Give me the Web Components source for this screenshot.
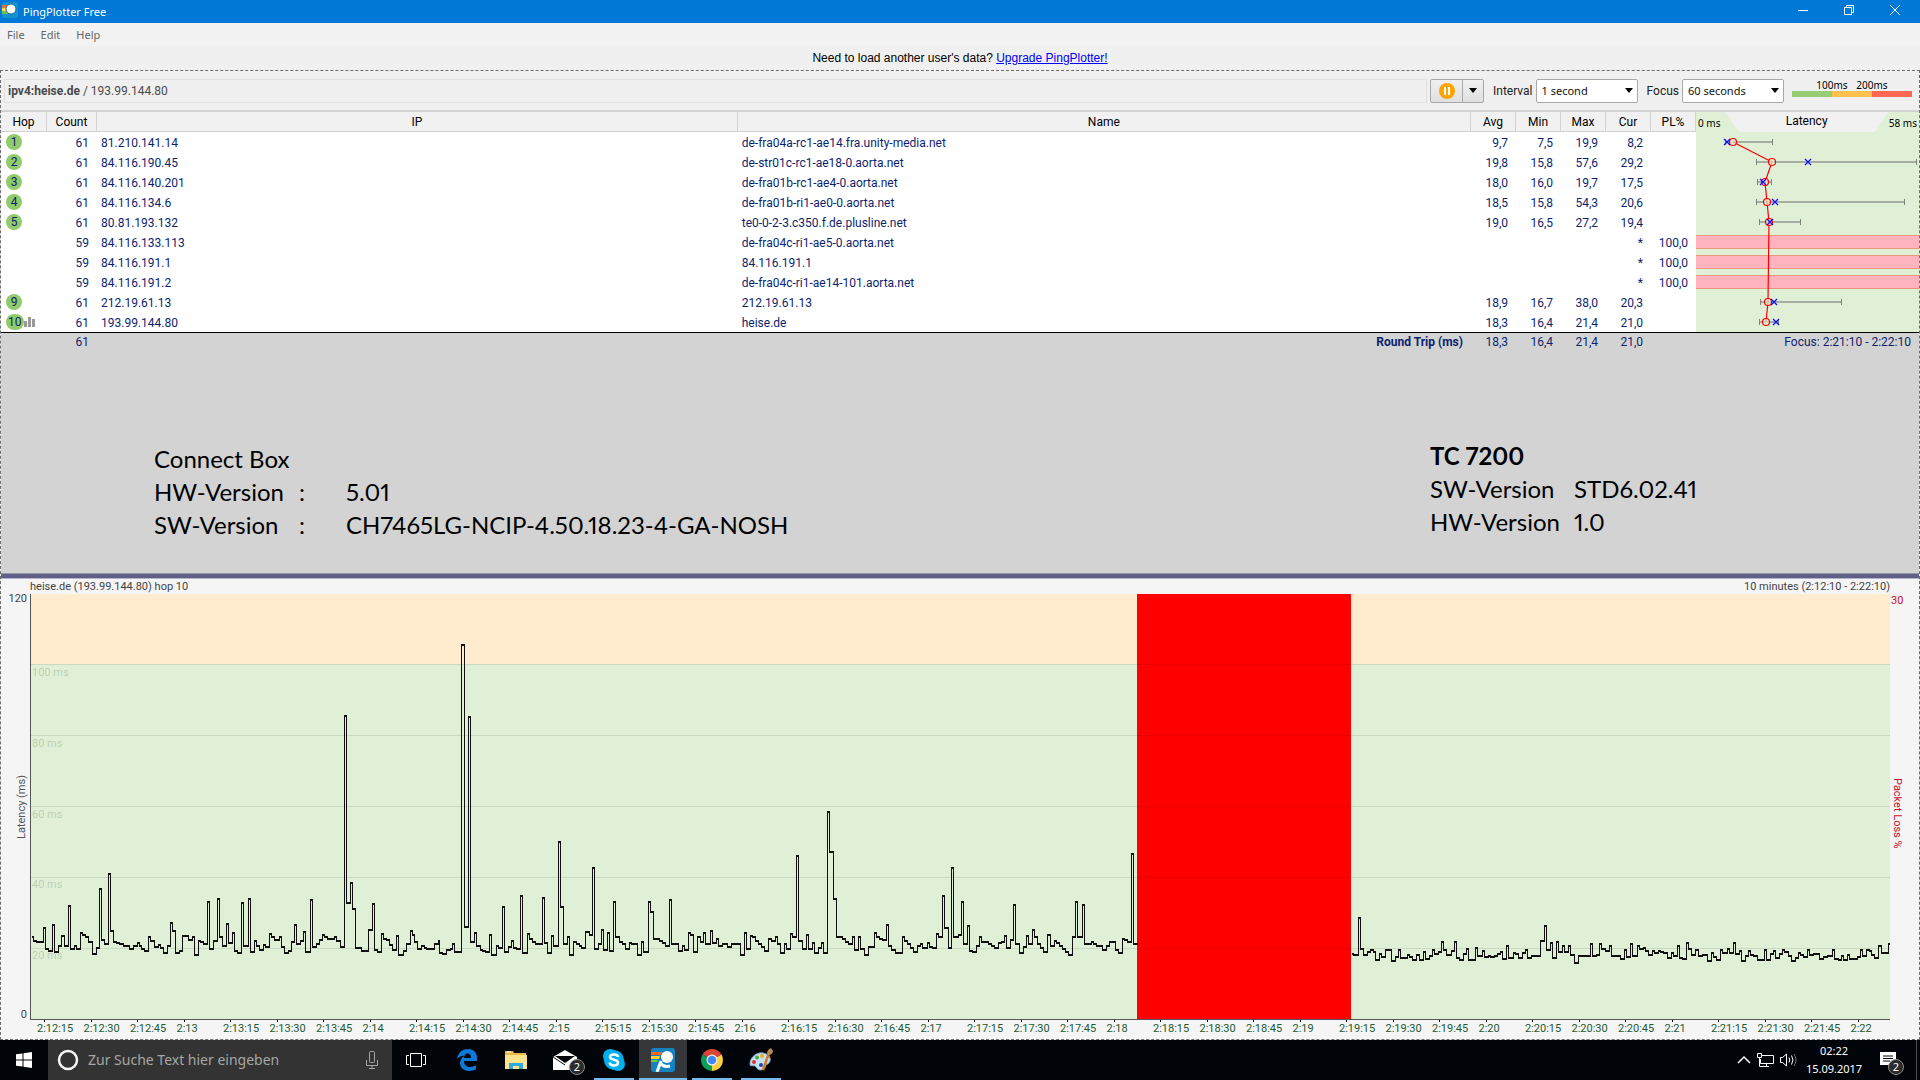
<!DOCTYPE html>
<html lang="de">
<head>
<meta charset="utf-8">
<title>PingPlotter Free</title>
<style>
  html, body { height: 100%; }
  body {
    margin: 0;
    display: flex;
    flex-direction: column;
    background: #f0f0f0;
    color: #000;
    font: 12px/16px Roboto, sans-serif;
  }
  main {
    flex: 1;
    min-height: 0;
    display: flex;
    flex-direction: column;
    border: 1px dashed #6e6e6e;
  }
  .results { display: flex; background: #fff; }
  hop-table { flex: 1; min-width: 0; }
  .notes {
    display: flex;
    justify-content: space-between;
    padding: 88px 219px 32px 153px;
    background: #d3d3d3;
  }
  time-graph { flex: 1; min-height: 0; }
</style>
</head>
<body>
  <title-bar>PingPlotter Free</title-bar>
  <menu-bar>
    <a href="#file">File</a>
    <a href="#edit">Edit</a>
    <a href="#help">Help</a>
  </menu-bar>
  <upgrade-notice>Need to load another user's data? <a slot="link" href="#upgrade">Upgrade PingPlotter!</a></upgrade-notice>
  <main>
    <target-bar data-host="ipv4:heise.de" data-ip="193.99.144.80"></target-bar>
    <div class="results">
      <hop-table></hop-table>
      <latency-graph data-max="58"></latency-graph>
    </div>
    <div class="notes">
      <version-note data-gap="wide">
        <span slot="title">Connect Box</span>
        <span>HW-Version</span><span>:</span><span>5.01</span>
        <span>SW-Version</span><span>:</span><span>CH7465LG-NCIP-4.50.18.23-4-GA-NOSH</span>
      </version-note>
      <version-note data-gap="narrow">
        <b slot="title">TC 7200</b>
        <span>SW-Version</span><span>STD6.02.41</span>
        <span>HW-Version</span><span>1.0</span>
      </version-note>
    </div>
    <time-graph data-title="heise.de (193.99.144.80) hop 10" data-range="10 minutes (2:12:10 - 2:22:10)"></time-graph>
  </main>
  <task-bar></task-bar>

<script>
// one entry per hop: number, count, ip, name, avg, min, max, cur
const hops = [
  [1, 61, "81.210.141.14", "de-fra04a-rc1-ae14.fra.unity-media.net", 9.7, 7.5, 19.9, 8.2],
  [2, 61, "84.116.190.45", "de-str01c-rc1-ae18-0.aorta.net", 19.8, 15.8, 57.6, 29.2],
  [3, 61, "84.116.140.201", "de-fra01b-rc1-ae4-0.aorta.net", 18.0, 16.0, 19.7, 17.5],
  [4, 61, "84.116.134.6", "de-fra01b-ri1-ae0-0.aorta.net", 18.5, 15.8, 54.3, 20.6],
  [5, 61, "80.81.193.132", "te0-0-2-3.c350.f.de.plusline.net", 19.0, 16.5, 27.2, 19.4],
  [6, 59, "84.116.133.113", "de-fra04c-ri1-ae5-0.aorta.net"],
  [7, 59, "84.116.191.1", "84.116.191.1"],
  [8, 59, "84.116.191.2", "de-fra04c-ri1-ae14-101.aorta.net"],
  [9, 61, "212.19.61.13", "212.19.61.13", 18.9, 16.7, 38.0, 20.3],
  [10, 61, "193.99.144.80", "heise.de", 18.3, 16.4, 21.4, 21.0]
];
const fmt = n => n.toFixed(1).replace(".", ",");

function attach(el, html){
  const template = document.createElement("template");
  template.innerHTML = html;
  el.attachShadow({mode:"open"}).appendChild(template.content.cloneNode(true));
}

class TitleBar extends HTMLElement{
  constructor(){
    super();
    attach(this, `
<style>
  :host{ display: flex; align-items: center; height: 23px; padding-right: 2px; background: #0078d7; color: #fff; font: 11px/16px "Noto Sans", sans-serif; }
  .logo{ margin: 0 5px 4px 2px; }
  .name{ flex: 1; }
  button{ width: 46px; height: 23px; padding: 0 0 3px; border: 0; background: none; }
  svg{ display: block; margin: auto; }
</style>
<svg class="logo" width="16" height="16" viewBox="0 0 16 16">
  <rect width="16" height="16" rx="3" fill="#1592cf"/>
  <path d="M0 3h8v3H0z" fill="#f26b3a"/><path d="M0 6h6v3H0z" fill="#ffd93b"/><path d="M0 9h6v3H0z" fill="#6fc04f"/>
  <circle cx="9" cy="7" r="5" fill="#fff" stroke="#0d6d9f"/>
</svg>
<span class="name"><slot></slot></span>
<button aria-label="Minimize"><svg width="10" height="10"><path d="M0 5.500h10" stroke="#fff"/></svg></button>
<button aria-label="Restore"><svg width="10" height="10" fill="none" stroke="#fff"><path d="M.5 2.500h7v7h-7zM2.500 2V.5h7v7H8"/></svg></button>
<button aria-label="Close"><svg width="10" height="10"><path d="M0 0l10 10M10 0L0 10" stroke="#fff"/></svg></button>
`);
  }
}
customElements.define("title-bar", TitleBar);

class MenuBar extends HTMLElement{
  constructor(){
    super();
    attach(this, `
<style>
  :host{ display: block; background: #f2f2f2; font: 11px/23px "Noto Sans", sans-serif; }
  nav{ display: flex; gap: 16px; height: 23px; padding-left: 7px; }
  ::slotted(a){ color: #666; text-decoration: none; }
</style>
<nav><slot></slot></nav>
`);
  }
}
customElements.define("menu-bar", MenuBar);

class UpgradeNotice extends HTMLElement{
  constructor(){
    super();
    attach(this, `
<style>
  :host{ display: block; height: 24px; text-align: center; font: 12px/24px "Liberation Sans", sans-serif; }
  ::slotted(a){ color: #00f; }
</style>
<slot></slot> <slot name="link"></slot>
`);
  }
}
customElements.define("upgrade-notice", UpgradeNotice);

class TargetBar extends HTMLElement{
  constructor(){
    super();
    attach(this, `
<style>
  :host{ display: flex; align-items: center; height: 39px; padding: 0 7px 0 3px; border-bottom: 2px solid #d3d3d3; box-sizing: content-box; }
  *{ box-sizing: border-box; }
  .target{ flex: 1; height: 24px; padding: 0 3px; border: 1px solid #e1e1e1; color: #4a4a4a; line-height: 23px; }
  .split{ display: flex; height: 24px; margin: 0 9px 0 3px; border: 1px solid #a8a8a8; border-radius: 2px; background: linear-gradient(#f0f0f0, #e0e0e0); }
  button{ display: flex; align-items: center; justify-content: center; padding: 0; border: 0; background: none; }
  .pause{ width: 31px; }
  .more{ width: 21px; border-left: 1px solid #a8a8a8; }
  label{ display: flex; align-items: center; gap: 3px; margin-right: 9px; color: #222; }
  label:last-of-type{ margin-right: 8px; }
  .box{ position: relative; }
  .box svg{ position: absolute; right: 5px; top: 9px; pointer-events: none; }
  select{ appearance: none; width: 102px; height: 24px; padding: 0 5px; border: 1px solid #a8a8a8; border-radius: 2px; background: #fff; color: #111; font: 11px/22px "Noto Sans", sans-serif; }
  .legend{ width: 120px; padding-bottom: 5px; font: 10px/12px "Noto Sans", sans-serif; text-align: center; }
  .labels{ display: flex; justify-content: center; }
  .labels span{ width: 40px; }
  .bar{ display: flex; height: 6px; }
  .bar i{ flex: 1; background: #97ce74; }
  .bar .warn{ background: #ffc04d; }
  .bar .bad{ background: #ff6750; }
</style>
<div class="target"><b></b> / <span></span></div>
<div class="split">
  <button class="pause" aria-label="Pause">
    <svg width="16" height="16"><circle cx="8" cy="8" r="8" fill="#ffa500"/><path d="M6 4v8M10 4v8" stroke="#fff" stroke-width="2"/></svg>
  </button>
  <button class="more" aria-label="More"><svg width="8" height="5"><path d="M0 0h8L4 5z"/></svg></button>
</div>
<label for="interval">Interval
  <span class="box"><select id="interval"><option>1 second</option><option>5 seconds</option></select><svg width="8" height="5"><path d="M0 0h8L4 5z"/></svg></span>
</label>
<label for="focus">Focus
  <span class="box"><select id="focus"><option>60 seconds</option><option>5 minutes</option></select><svg width="8" height="5"><path d="M0 0h8L4 5z"/></svg></span>
</label>
<div class="legend">
  <div class="labels"><span>100ms</span><span>200ms</span></div>
  <div class="bar"><i></i><i class="warn"></i><i class="bad"></i></div>
</div>
`);
  }
  connectedCallback(){
    this.shadowRoot.querySelector("b").textContent = this.dataset.host;
    this.shadowRoot.querySelector(".target span").textContent = this.dataset.ip;
  }
}
customElements.define("target-bar", TargetBar);

class HopTable extends HTMLElement{
  constructor(){
    super();
    attach(this, `
<style>
  :host{ display: block; }
  table{ width: 100%; table-layout: fixed; border-collapse: separate; border-spacing: 0; color: #0c1f70; }
  .hop{ width: 46px; }
  .count{ width: 50px; }
  .ip{ width: 37.8%; }
  .num{ width: 45px; }
  th, td{ box-sizing: border-box; height: 20px; padding: 0; white-space: nowrap; text-align: right; font-weight: normal; }
  th{ border-right: 1px solid #d3d3d3; border-bottom: 1px solid #d3d3d3; background: #f1f1f1; color: #000; text-align: center; }
  td{ padding: 2px 8px 0 0; }
  td.text{ padding-left: 4px; text-align: left; }
  td.mark{ padding: 0 0 0 5px; text-align: left; }
  .mark div{ display: flex; align-items: center; }
  .mark span{ min-width: 16px; padding: 0 2px; box-sizing: border-box; border-radius: 8px; background: #91cb6c; text-align: center; }
  tfoot td{ height: 19px; padding-top: 0; border-top: 1px solid #000; background: #d3d3d3; }
</style>
<table>
  <colgroup><col class="hop"><col class="count"><col class="ip"><col><col class="num"><col class="num"><col class="num"><col class="num"><col class="num"></colgroup>
  <thead><tr><th>Hop</th><th>Count</th><th>IP</th><th>Name</th><th>Avg</th><th>Min</th><th>Max</th><th>Cur</th><th>PL%</th></tr></thead>
  <tbody></tbody>
  <tfoot><tr><td></td><td>61</td><td></td><td><b>Round Trip (ms)</b></td><td>18,3</td><td>16,4</td><td>21,4</td><td>21,0</td><td></td></tr></tfoot>
</table>
`);
  }
  connectedCallback(){
    const bars = `<svg width="11" height="10" fill="#999"><path d="M0 4h3v6H0zM4 0h3v10H4zM8 2h3v8H8z"/></svg>`;
    this.shadowRoot.querySelector("tbody").innerHTML = hops.map(([n, count, ip, name, ...ms]) => {
      const lost = !ms.length;
      const mark = lost ? "" : `<div><span>${n}</span>${n === 10 ? bars : ""}</div>`;
      const nums = lost ? `<td></td><td></td><td></td><td>*</td><td>100,0</td>`
        : ms.map(v => `<td>${fmt(v)}</td>`).join("") + `<td></td>`;
      return `<tr><td class="mark">${mark}</td><td>${count}</td><td class="text">${ip}</td><td class="text">${name}</td>${nums}</tr>`;
    }).join("");
  }
}
customElements.define("hop-table", HopTable);

class LatencyGraph extends HTMLElement{
  constructor(){
    super();
    attach(this, `
<style>
  :host{ display: flex; flex-direction: column; width: 223px; background: #dff0d6; }
  header{ display: flex; justify-content: space-between; height: 20px; font: 10px/22px "Noto Sans", sans-serif; padding: 0 2px; }
  h2{ flex: 1; margin: 0 0 0 4px; background: #f1f1f1; clip-path: polygon(0 0, 100% 0, calc(100% - 14px) 100%, 15px 100%); font: 12px/18px Roboto, sans-serif; text-align: center; }
  svg{ display: block; }
  footer{ height: 18px; padding-right: 8px; border-top: 1px solid #000; background: #d3d3d3; color: #0c1f70; line-height: 18px; text-align: right; }
</style>
<header><span>0 ms</span><h2>Latency</h2><span class="max"></span></header>
<svg width="223" height="200" fill="none"></svg>
<footer>Focus: 2:21:10 - 2:22:10</footer>
`);
  }
  connectedCallback(){
    const max = Number(this.dataset.max);
    this.shadowRoot.querySelector(".max").textContent = max + " ms";
    const x = ms => Math.round(ms * 222 / max);
    let lost = "", ranges = "", marks = "", line = [], rings = "";
    hops.forEach(([n, , , , avg, min, high, cur], i) => {
      const y = i * 20 + 10;
      if(avg === undefined){
        lost += `<path d="M0 ${y - 6.5}H223M0 ${y + 6.5}H223" stroke="#e9967a"/><path d="M0 ${y - 6}H223V${y + 6}H0z" fill="#ffb3be"/>`;
        return;
      }
      ranges += `<path d="M${x(min)} ${y}H${x(high)}" stroke="#a6ada3" stroke-width="2"/><path d="M${x(min)}.5 ${y - 3}v6M${x(high)}.5 ${y - 3}v6" stroke="#7c8379"/>`;
      line.push(x(avg) + "," + y);
      rings += `<circle cx="${x(avg)}" cy="${y}" r="3.500"/>`;
      marks += `M${x(cur) - 3} ${y - 3}l6 6m0 -6l-6 6`;
    });
    this.shadowRoot.querySelector("svg").innerHTML = lost + ranges +
      `<polyline points="${line.join(" ")}" stroke="#f00" stroke-width="1.200"/><g stroke="#f00" stroke-width="1.200" fill="#dff0d6" fill-opacity=".7">${rings}</g><path d="${marks}" stroke="#1010ff" stroke-width="1.300"/>`;
  }
}
customElements.define("latency-graph", LatencyGraph);

class VersionNote extends HTMLElement{
  constructor(){
    super();
    attach(this, `
<style>
  :host{ display: block; font: 24px/33px Lato, sans-serif; font-variant-numeric: proportional-nums; }
  .rows{ display: grid; grid-template-columns: 144px 1fr; white-space: nowrap; }
  :host([data-gap="narrow"]){ width: 270px; }
  :host([data-gap="wide"]) .rows{ grid-template-columns: 145px 47px 1fr; }
  :host([data-gap="wide"]){ margin-top: 3px; }
</style>
<slot name="title"></slot>
<div class="rows"><slot></slot></div>
`);
  }
}
customElements.define("version-note", VersionNote);

// Recorded steps as "x:level", in thirds of a pixel, split in blocks 480 px apart.
// Level 1348 is 0 ms, "-" is a gap without replies.
const trace = [
  `93:1101 99:1112 108:1115 131:1074 137:1137 146:1143 158:1064 164:1146 176:1128 185:1097 194:1128 206:1008 212:1137 222:1128 230:1137 242:1088 248:1096 257:1101 266:1117 278:1152 290:1134 299:957 305:1109 314:1121 326:912 332:1083 341:1116 350:1119 359:1123 371:1129 389:1137 400:1128 411:1119 417:1128 425:1136 434:1143 446:1101 452:1112 464:1130 476:1124 482:1133 491:1149 503:1129 512:1059 518:1083 527:1149 539:1142 548:1097 566:1109 578:1101 584:1155 596:1113 602:1116 611:1121 623:996 629:1137 641:1112 653:986 659:1101 668:1128 680:1062 686:1118 698:1088 704:1143 713:1149 725:998 731:1128 746:986 752:1146 764:1112 770:1128 779:1140 791:1126 797:1130 809:1091 815:1101 824:1109 839:1101 845:1130 854:1149 866:1143 875:1115 884:1064 890:1121 902:1112 911:1086 917:1146 932:990 938:1130 950:1121 959:1110 968:1095 974:1101 983:1106 1004:1101 1010:1113 1022:1130 1034:438 1040:998 1052:939 1058:1018 1067:1133 1085:1142 1106:1080 1118:1001 1124:1140 1133:1146 1145:1091 1151:1106 1160:1110 1169:1124 1178:1140 1190:1097 1196:1155 1211:1142 1220:1123 1230:1083 1236:1095 1244:1116 1253:1137 1265:1128 1272:1133 1280:1137 1304:1123 1314:1113 1319:1149 1328:1152 1340:1140 1350:1136 1358:1122 1364:1146 1385:225 1394:1071 1406:440 1412:1116 1424:1089 1430:1128`,
  `0:1140 8:1143 17:1146 29:1095 35:1155 50:1128 56:1134 68:1011 74:1146 86:1130 95:1112 101:1133 110:1137 122:977 128:1149 143:1091 149:1106 158:1115 167:1123 188:983 194:1119 203:1149 215:1097 221:1128 236:816 242:1011 251:1122 263:1101 269:1155 281:1115 288:1122 297:1129 305:1134 317:1086 327:1095 338:894 344:1137 356:1123 365:1080 371:1140 383:1089 389:1143 401:996 407:1102 417:1115 427:1123 437:1137 449:1119 455:1123 472:1155 485:1115 491:1146 506:996 512:1026 521:1107 539:1113 548:1119 557:1128 569:990 575:1122 596:1143 608:1128 614:1140 626:1088 632:1095 641:1146 653:1101 660:1115 671:1088 677:1123 692:1083 698:1119 710:1106 716:1128 728:1122 742:1130 755:1122 770:1123 782:1155 794:1088 800:1137 812:1097 818:1102 827:1113 836:1123 845:1130 854:1143 866:1106 875:1113 887:1101 893:1122 902:1149 914:1123 920:1137 932:1092 938:1101 950:859 956:1113 968:1137 980:1095 986:1137 998:1119 1004:1149 1016:1134 1025:1119 1031:1149 1043:725 1049:846 1061:986 1070:1101 1088:1107 1097:1116 1106:1123 1118:1101 1124:1140 1136:1101 1142:1137 1154:1155 1166:1130 1184:1088 1190:1101 1199:1107 1208:1110 1220:1064 1226:1128 1235:1140 1247:1149 1268:1101 1274:1113 1283:1123 1292:1134 1301:1146 1313:1128 1321:1123 1328:1134 1343:1119 1349:1130 1358:1134 1370:1092 1376:1102 1388:977 1394:1074 1404:1134 1415:893 1421:1101 1436:1095`,
  `0:1095 5:996 11:1122 23:1068 29:1143 37:1146 50:1128 59:1101 65:1115 86:1122 95:1129 104:1134 116:1119 125:1115 134:1097 140:1134 152:1109 161:1004 167:1122 179:1149 191:1130 200:1097 206:1122 218:1080 224:1102 233:1122 242:1134 251:1146 263:1095 271:1128 284:1112 290:1119 299:1128 308:1137 317:1146 326:1155 338:1101 347:996 353:1102 368:1004 374:1123 395:1115 401:1123 410:1128 428:1140 440:1128 449:1115 467:1140 476:1149 488:1106 494:1110 503:1116 515:852 521:1122 531:- 1173:1152 1181:1155 1196:1044 1202:1137 1211:1155 1223:1146 1232:1140 1239:1146 1247:1170 1259:1152 1265:1161 1277:1140 1295:1173 1307:1161 1316:1140 1322:1164 1343:1155 1349:1161 1358:1170 1370:1155 1379:1170 1391:1146 1397:1167 1409:1158 1418:1140 1424:1152 1436:1146`,
  `0:1146 5:1115 11:1140 20:1155 35:1143 44:1115 50:1164 59:1170 71:1152 80:1137 86:1170 107:1133 113:1158 128:1142 134:1160 146:1158 152:1160 164:1158 173:1152 182:1145 188:1167 200:1128 206:1164 221:1148 227:1152 236:1164 248:1149 257:1139 263:1164 275:1158 302:1112 314:1068 320:1140 332:1119 338:1164 350:1115 356:1146 368:1128 374:1146 386:1128 392:1155 404:1179 416:1158 452:1123 458:1158 470:1155 479:1123 485:1137 497:1142 509:1128 515:1158 542:1167 554:1139 560:1161 572:1121 578:1158 593:1128 599:1137 611:1133 617:1142 626:1155 638:1143 644:1149 656:1143 662:1146 671:1149 683:1164 695:1149 701:1158 713:1128 719:1164 728:1167 740:1118 746:1137 755:1155 767:1140 775:1158 788:1154 803:1173 815:1149 821:1161 830:1170 842:1139 848:1149 863:1137 869:1148 881:1118 887:1152 899:1142 905:1173 917:1158 926:1143 932:1155 941:1158 953:1170 974:1140 980:1169 992:1152 1001:1143 1007:1164 1019:1152 1028:1140 1034:1146 1046:1158 1055:1173 1067:1163 1076:1149 1082:1155 1091:1160 1103:1140 1109:1155 1121:1151 1139:1167 1151:1160 1163:1157 1178:1140 1184:1167 1196:1170 1205:1158 1211:1170 1223:1155 1229:1167 1253:1160 1262:1140 1268:1158 1280:1140 1289:1143 1295:1155 1304:1164 1316:1128 1325:1149 1346:1123 1350:-`
];

class TimeGraph extends HTMLElement{
  constructor(){
    super();
    attach(this, `
<style>
  :host{
    display: grid;
    grid-template-columns: 29px 1fr 29px;
    grid-template-rows: 6px 15px 1fr 19px;
    background: #f5f5f5;
    color: #444;
    font-size: 11px;
    line-height: 15px;
  }
  .splitter{ grid-column: 1 / 4; box-sizing: border-box; border-top: 1px solid #9696aa; border-bottom: 1px solid #b4b4cc; background: #5f5f87; }
  header{ grid-column: 2; display: flex; justify-content: space-between; }
  .left, .right{ grid-row: 3; display: flex; flex-direction: column; justify-content: space-between; }
  .left{ grid-column: 1; align-items: flex-end; padding-right: 3px; line-height: 10px; }
  .right{ grid-column: 3; align-items: flex-start; padding: 0 1px; color: #c8102e; line-height: 13px; }
  .left b, .right b{ font-weight: normal; writing-mode: vertical-rl; }
  .left b{ transform: rotate(180deg); color: #555; line-height: 11px; }
  .left i, .right i{ font-style: normal; }
  .plot{ grid-column: 2; grid-row: 3; position: relative; display: grid; grid-template-rows: repeat(6, 1fr); border-left: 1px solid #555; border-bottom: 1px solid #555; }
  .plot svg{ position: absolute; left: 0; top: 0; width: 100%; height: 100%; }
  .plot span{ position: relative; padding: 0 1px; color: rgba(80, 100, 70, .25); }
  .times{ grid-column: 2; display: grid; grid-template-columns: repeat(40, 1fr); padding-left: 7px; margin-right: -7px; color: #1c5a33; white-space: nowrap; line-height: 14px; }
  .times span::before{ content: ""; display: block; width: 1px; height: 2px; margin-left: 7px; background: #000; }
</style>
<div class="splitter"></div>
<header><span class="title"></span><span class="range"></span></header>
<div class="left"><i>120</i><b>Latency (ms)</b><i>0</i></div>
<div class="plot">
  <svg viewBox="0 0 1859 425" preserveAspectRatio="none" shape-rendering="crispEdges">
    <path d="M0 0h1859v70H0z" fill="#ffebcd"/>
    <path d="M0 70h1859v355H0z" fill="#dff0d6"/>
    <path d="M1106 0h214v425h-214z" fill="#f00"/>
    <path d="M0 70.500h1859M0 141.500h1859M0 212.500h1859M0 283.500h1859M0 354.500h1859" stroke="#000" stroke-opacity=".09"/>
    <g fill="none" stroke="#111"><path class="trace"/><path class="trace" transform="translate(0 1)"/></g>
  </svg>
</div>
<div class="right"><i>30</i><b>Packet Loss %</b><i></i></div>
<div class="times"></div>
`);
  }
  connectedCallback(){
    this.shadowRoot.querySelector(".title").textContent = this.dataset.title;
    this.shadowRoot.querySelector(".range").textContent = this.dataset.range;
    let d = "", down = false;
    trace.forEach((block, i) => {
      for(const step of block.split(" ")){
        const [sx, sy] = step.split(":");
        const x = i * 480 - 31 + Math.floor(sx / 3) + 0.5;
        if(down) d += "H" + x;
        if(sy === "-"){ down = false; continue; }
        const y = Math.round(sy / 3) - 24.5;
        d += down ? "V" + y : "M" + x + " " + y;
        down = true;
      }
    });
    this.shadowRoot.querySelectorAll(".trace").forEach(p => p.setAttribute("d", d));
    const plot = this.shadowRoot.querySelector(".plot");
    ["", "100 ms", "80 ms", "60 ms", "40 ms", "20 ms"].forEach(t => {
      const label = document.createElement("span");
      label.textContent = t;
      plot.appendChild(label);
    });
    // a label each 15 seconds, full minutes without the seconds
    let times = "";
    for(let s = 15; s <= 600; s += 15){
      const min = 12 + Math.floor(s / 60);
      times += `<span>2:${min}${s % 60 ? ":" + s % 60 : ""}</span>`;
    }
    this.shadowRoot.querySelector(".times").innerHTML = times;
  }
}
customElements.define("time-graph", TimeGraph);

class TaskButton extends HTMLElement{
  constructor(){
    super();
    attach(this, `
<style>
  :host{ display: block; width: 48px; height: 40px; }
  button{ display: flex; align-items: center; justify-content: center; position: relative; box-sizing: border-box; width: 100%; height: 100%; padding: 0; border: 0; background: none; }
  :host([data-state]) button::after{ content: ""; position: absolute; left: 4px; right: 4px; bottom: 0; height: 2px; background: #76b9ed; }
  :host([data-state="active"]) button{ background: #35373b; }
  :host([data-state="active"]) button::after{ left: 0; right: 0; }
  .badge{ position: absolute; right: 4px; bottom: 5px; width: 16px; height: 16px; box-sizing: border-box; border: 1px solid #8a8a8a; border-radius: 8px; background: #2b2b2b; color: #fff; font: 11px/14px "Noto Sans", sans-serif; }
  .badge:empty{ display: none; }
</style>
<button><slot></slot><span class="badge"></span></button>
`);
  }
  connectedCallback(){
    this.shadowRoot.querySelector("button").setAttribute("aria-label", this.dataset.label);
    this.shadowRoot.querySelector(".badge").textContent = this.dataset.badge || "";
  }
}
customElements.define("task-button", TaskButton);

class TaskBar extends HTMLElement{
  constructor(){
    super();
    attach(this, `
<style>
  :host{ display: flex; height: 40px; background: #010409; color: #fff; font: 12px/18px "Noto Sans", sans-serif; }
  svg{ display: block; }
  .search{ display: flex; align-items: center; width: 344px; box-sizing: border-box; padding: 0 14px 0 9px; background: #333; }
  input{ flex: 1; min-width: 0; margin: 0; padding: 0 0 0 9px; border: 0; background: none; color: #fff; font: 14px/20px "Noto Sans", sans-serif; }
  input::placeholder{ color: #a6a6a6; opacity: 1; }
  .apps{ flex: 1; display: flex; gap: 1px; }
  .apps .view{ margin-right: 2px; }
  .tray{ display: flex; align-items: center; gap: 6px; }
  .clock{ width: 60px; margin-right: 4px; text-align: center; font-size: 11px; }
  .note{ width: 40px; margin-right: 8px; }
  .desk{ width: 4px; height: 40px; border-left: 1px solid #4a4d50; box-sizing: border-box; }
  .tray .note, .tray .desk{ margin-left: -6px; }
</style>
<task-button data-label="Start"><svg width="16" height="16" fill="#fff"><path d="M0 2.300l6.500-.9v6.100H0zM7.500 1.200L16 0v7.500H7.500zM0 8.500h6.500v6.100L0 13.700zM7.500 8.500H16V16l-8.500-1.200z"/></svg></task-button>
<div class="search">
  <svg width="22" height="22"><circle cx="11" cy="11" r="9" fill="none" stroke="#f5f5f5" stroke-width="2.500"/></svg>
  <input id="query" aria-label="Suche" placeholder="Zur Suche Text hier eingeben">
  <svg width="12" height="18" fill="none" stroke="#a6a6a6"><rect x="3.500" y=".5" width="5" height="11" rx="1"/><path d="M.5 9v5.500h11V9M6 14.500V17M3 17.500h6"/></svg>
</div>
<div class="apps">
  <task-button class="view" data-label="Task View"><svg width="20" height="14" fill="none" stroke="#fff"><path d="M4.500.5h11v13h-11zM3 2.500H.5v9H3M17 2.500h2.500v9H17"/></svg></task-button>
  <task-button data-label="Edge"><svg width="20" height="22" viewBox="0 0 20 22"><path d="M0 10C1 4 5 0 11 0c6 0 9 4 9 9v3H7c0 4 3 6 6 6 2 0 4-.6 6-1.700v4C17 21.500 15 22 12 22 6 22 3 18 3 14c0-3 2-6 5-7.500C4 6.500 1.500 8.500 0 10zM7 9h7c0-3-1.200-4.500-3.500-4.500S7.300 6 7 9z" fill="#0b7ad8"/></svg></task-button>
  <task-button data-label="Explorer"><svg width="22" height="18"><path d="M0 0h8l1 2h12v3H0z" fill="#e8b84a"/><path d="M2 1h4" stroke="#fff"/><path d="M0 4h22v14H0z" fill="#fde38d"/><path d="M4 18v-6h14v6h-4v-3H8v3z" fill="#2fa9e0"/></svg></task-button>
  <task-button data-label="Mail" data-badge="2"><svg width="24" height="20"><path d="M0 7l12-7 12 7v13H0z" fill="#fff"/><path d="M2 6h20l-10 7z" fill="#010409"/><path d="M0 7l12 8" stroke="#010409"/></svg></task-button>
  <task-button data-label="Skype" data-state="open"><svg width="22" height="22"><circle cx="7" cy="7" r="7" fill="#00aff0"/><circle cx="15" cy="15" r="7" fill="#00aff0"/><circle cx="11" cy="11" r="10" fill="#00aff0"/><path d="M15 8c0-2-2-2.600-4-2.600-2.300 0-4 .9-4 2.700 0 3.700 8 1.800 8 5.300 0 2-2 3-4.200 3S7 15.500 6.700 13.500" fill="none" stroke="#fff" stroke-width="2.500"/></svg></task-button>
  <task-button data-label="PingPlotter" data-state="active"><svg width="24" height="24"><rect width="24" height="24" rx="3" fill="#1583bf"/><path d="M0 4h11l-1 3H0z" fill="#f2672e"/><path d="M0 8h9l-1 3H0z" fill="#ffd02e"/><path d="M0 12h7l-1 2H0z" fill="#7cc243"/><path d="M10 13L6 24" stroke="#fff" stroke-width="3"/><path d="M9 14c2 4 6 5 10 4" fill="none" stroke="#fff" stroke-width="3"/><circle cx="16" cy="9" r="6" fill="#fff"/></svg></task-button>
  <task-button data-label="Chrome" data-state="open"><svg width="22" height="22"><path d="M11 11L1.500 5.500A11 11 0 0 1 20.500 5.500z" fill="#db4437"/><path d="M11 11l9.500-5.500A11 11 0 0 1 11 22z" fill="#ffcd40"/><path d="M11 11v11A11 11 0 0 1 1.500 5.500z" fill="#0f9d58"/><path d="M11 6h9.800l-.3-.5" fill="#db4437"/><circle cx="11" cy="11" r="5.500" fill="#f1f1f1"/><circle cx="11" cy="11" r="4.300" fill="#4285f4"/></svg></task-button>
  <task-button data-label="Paint" data-state="open"><svg width="24" height="24"><path d="M1 16C1 9 8 4 14 5c6 1 8 5 7 8s-3 3-4 4 0 5-6 5c-3 0-3-3-5-4s-5 1-5-2z" fill="#c4dff0" stroke="#7fa6c0"/><circle cx="5" cy="14" r="2" fill="#d33"/><circle cx="8" cy="9.500" r="2" fill="#4a4"/><circle cx="13" cy="8" r="2" fill="#f6a623"/><circle cx="12" cy="17" r="2" fill="#24a"/><path d="M20 5l-6 17" stroke="#d67a1e" stroke-width="2.500"/><path d="M18 5c0-2 1-3 4-5l2 3c0 2-2 4-4 4z" fill="#b98954"/></svg></task-button>
</div>
<div class="tray">
  <svg width="14" height="8" fill="none" stroke="#fff" stroke-width="1.500"><path d="M1 7l6-6 6 6"/></svg>
  <svg width="17" height="15" fill="none" stroke="#fff"><path d="M5 2.500h11.500v8H3.500V6M.5.500h4v4h-4zM2.500 5v8.500H12M9.500 11v3"/></svg>
  <svg width="18" height="14" fill="none" stroke="#fff"><path d="M.5 4.500h2l4-3.500v12l-4-3.500h-2zM9 4.500q1.500 2.500 0 5M11.500 2.500q3 4.500 0 9"/><path d="M14 1q4 6 0 12" stroke="#777"/></svg>
  <div class="clock">02:22<br>15.09.2017</div>
  <task-button class="note" data-label="Info-Center" data-badge="2"><svg width="16" height="16"><path d="M0 0h16v13h-5v3l-3-3H0z" fill="#fff"/><path d="M3 4h10M3 6.500h10M3 9h7" stroke="#010409"/></svg></task-button>
  <div class="desk"></div>
</div>
`);
  }
}
customElements.define("task-bar", TaskBar);
</script>
</body>
</html>
